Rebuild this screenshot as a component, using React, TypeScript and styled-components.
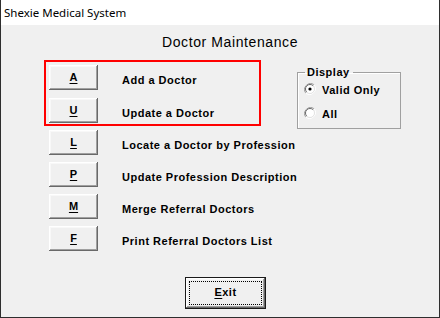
import React from "react";
import styled, { createGlobalStyle } from "styled-components";

const Global = createGlobalStyle`
  html, body { margin: 0; padding: 0; background: #ffffff; }
  * { box-sizing: border-box; }
`;

const Window = styled.div`
  width: 440px;
  height: 318px;
  display: flex;
  flex-direction: column;
  border-left: 1px solid #2e2e2e;
  border-right: 1px solid #2e2e2e;
  border-bottom: 1px solid #2e2e2e;
  background: #f0f0f0;
  font-family: "Liberation Sans", Arial, sans-serif;
  color: #000;
`;

const TitleBar = styled.div`
  height: 25px;
  background: #ffffff;
  display: flex;
  align-items: center;
  padding-left: 3px;
  padding-bottom: 1px;
  font-family: "Noto Sans", "Open Sans", sans-serif;
  font-size: 11.5px;
  color: #000;
`;

const Body = styled.div`
  flex: 1;
  display: flex;
  flex-direction: column;
  background: #f0f0f0;
`;

const Heading = styled.div`
  margin-top: 9px;
  height: 17px;
  line-height: 17px;
  padding-left: 161px;
  font-size: 14px;
  letter-spacing: 0.6px;
`;

const MainRow = styled.div`
  display: flex;
  align-items: flex-start;
  margin-top: 9px;
  padding-left: 43px;
`;

const Menu = styled.div`
  width: 217px;
  display: flex;
  flex-direction: column;
`;

const Highlight = styled.div`
  width: 217px;
  border: 2px solid #ff0000;
  padding: 3px 3px 1px 3px;
  display: flex;
  flex-direction: column;
  gap: 8px;
`;

const Rest = styled.div`
  margin-top: 4px;
  padding-left: 5px;
  display: flex;
  flex-direction: column;
  gap: 7px;
`;

const Row = styled.div`
  display: flex;
  align-items: center;
  height: 25px;
`;

const KeyButton = styled.button`
  flex: none;
  width: 49px;
  height: 25px;
  margin: 0;
  padding: 0;
  border: none;
  background: #f0f0f0;
  box-shadow: inset -1px -1px #696969, inset 1px 1px #ffffff,
    inset -2px -2px #a0a0a0, inset 2px 2px #f8f8f8;
  font-family: "Liberation Sans", Arial, sans-serif;
  font-weight: bold;
  font-size: 11px;
  color: #000;
  display: flex;
  align-items: center;
  justify-content: center;
  padding-bottom: 2px;
`;

const Key = styled.span`
  text-decoration: underline;
  text-underline-offset: 2px;
  text-decoration-thickness: 1px;
`;

const Label = styled.span`
  margin-left: 24px;
  padding-top: 4px;
  font-weight: bold;
  font-size: 11px;
  letter-spacing: 0.5px;
  white-space: nowrap;
`;

const Group = styled.fieldset`
  flex: none;
  margin: 7px 0 0 36px;
  width: 104px;
  height: 62px;
  padding: 0 0 0 6px;
  border: 1px solid #a0a0a0;
  box-shadow: 1px 1px 0 #ffffff inset;
  display: flex;
  flex-direction: column;
`;

const Legend = styled.legend`
  margin-left: 1px;
  padding: 0 3px 0 2px;
  font-weight: bold;
  font-size: 11px;
  letter-spacing: 0.5px;
  line-height: 11px;
`;

const RadioRow = styled.label`
  display: flex;
  align-items: center;
  height: 16px;
  margin-top: ${(p: { $top: number }) => p.$top}px;
  font-weight: bold;
  font-size: 11px;
  letter-spacing: 0.5px;
`;

const RadioText = styled.span`
  margin-left: 6px;
  padding-top: 1px;
`;

const Footer = styled.div`
  margin-top: 26px;
  padding-left: 184px;
`;

const ExitButton = styled.button`
  position: relative;
  width: 81px;
  height: 32px;
  margin: 0;
  padding: 0 0 2px 0;
  border: 1px solid #1a1a1a;
  background: #f0f0f0;
  box-shadow: inset -1px -1px #696969, inset 1px 1px #ffffff,
    inset -2px -2px #a0a0a0, inset 2px 2px #f8f8f8;
  font-family: "Liberation Sans", Arial, sans-serif;
  font-weight: bold;
  font-size: 11px;
  letter-spacing: 0.5px;
  color: #000;
  display: flex;
  align-items: center;
  justify-content: center;
`;

const FocusRing = styled.span`
  position: absolute;
  left: 3px;
  top: 3px;
  right: 3px;
  bottom: 3px;
  border: 1px dotted #000;
  pointer-events: none;
`;

const Radio: React.FC<{ checked?: boolean }> = ({ checked }) => (
  <svg width="12" height="12" viewBox="0 0 12 12">
    <path d="M10.2 1.8 A6 6 0 0 0 1.8 10.2" fill="none" stroke="#a0a0a0" strokeWidth="1" />
    <path d="M1.8 10.2 A6 6 0 0 0 10.2 1.8" fill="none" stroke="#ffffff" strokeWidth="1" />
    <circle cx="6" cy="6" r="4.5" fill="#ffffff" />
    <path d="M9.2 2.8 A4.5 4.5 0 0 0 2.8 9.2" fill="none" stroke="#696969" strokeWidth="1" />
    <path d="M2.8 9.2 A4.5 4.5 0 0 0 9.2 2.8" fill="none" stroke="#e3e3e3" strokeWidth="1" />
    {checked && <circle cx="6" cy="6" r="1.6" fill="#000" />}
  </svg>
);

const items = [
  { key: "A", label: "Add a Doctor" },
  { key: "U", label: "Update a Doctor" },
  { key: "L", label: "Locate a Doctor by Profession" },
  { key: "P", label: "Update Profession Description" },
  { key: "M", label: "Merge Referral Doctors" },
  { key: "F", label: "Print Referral Doctors List" },
];

const MenuRow: React.FC<{ k: string; label: string }> = ({ k, label }) => (
  <Row>
    <KeyButton>
      <Key>{k}</Key>
    </KeyButton>
    <Label>{label}</Label>
  </Row>
);

export default function App() {
  return (
    <>
      <Global />
      <Window>
        <TitleBar>Shexie Medical System</TitleBar>
        <Body>
          <Heading>Doctor Maintenance</Heading>
          <MainRow>
            <Menu>
              <Highlight>
                {items.slice(0, 2).map((it) => (
                  <MenuRow key={it.key} k={it.key} label={it.label} />
                ))}
              </Highlight>
              <Rest>
                {items.slice(2).map((it) => (
                  <MenuRow key={it.key} k={it.key} label={it.label} />
                ))}
              </Rest>
            </Menu>
            <Group>
              <Legend>Display</Legend>
              <RadioRow $top={3}>
                <Radio checked />
                <RadioText>Valid Only</RadioText>
              </RadioRow>
              <RadioRow $top={8}>
                <Radio />
                <RadioText>All</RadioText>
              </RadioRow>
            </Group>
          </MainRow>
          <Footer>
            <ExitButton>
              <FocusRing />
              <Key>E</Key>xit
            </ExitButton>
          </Footer>
        </Body>
      </Window>
    </>
  );
}
